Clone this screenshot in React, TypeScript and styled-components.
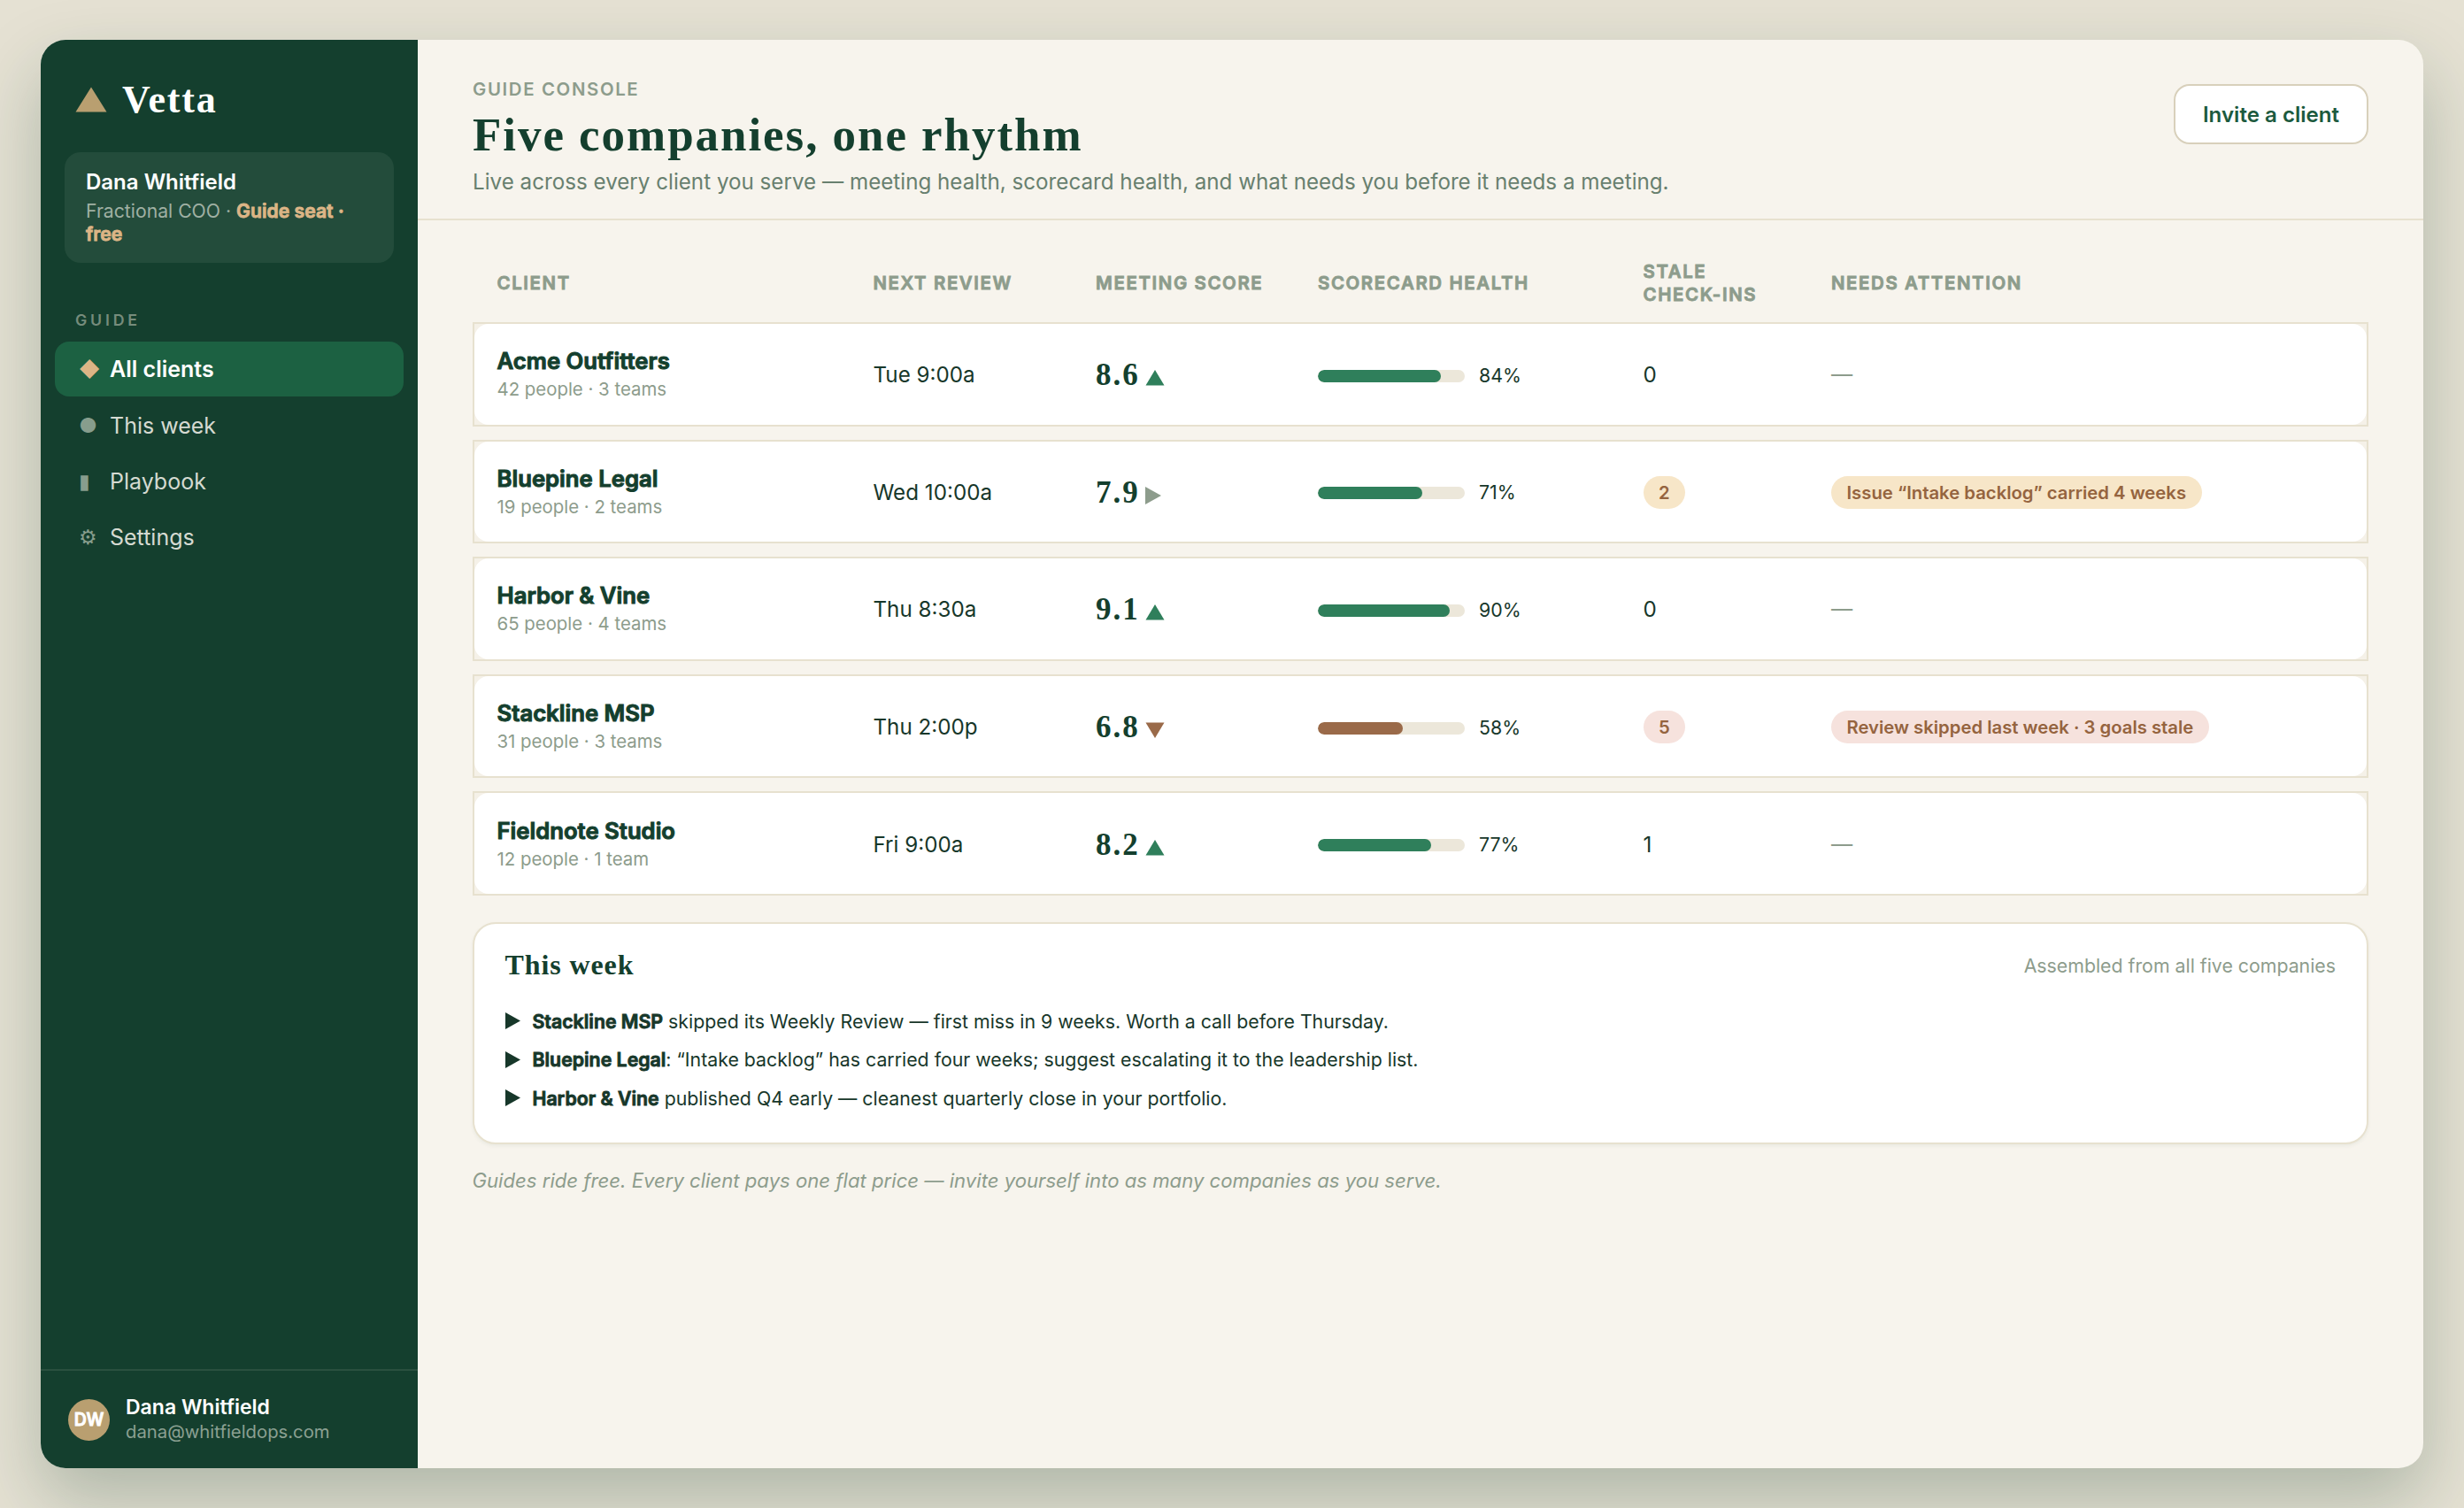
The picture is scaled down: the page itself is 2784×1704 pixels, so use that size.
import React from 'react'
import styled, { createGlobalStyle } from 'styled-components'

type Trend = 'up' | 'flat' | 'down'
type Tone = 'amber' | 'rose'

interface ClientI {
  name: string
  meta: string
  review: string
  score: string
  trend: Trend
  health: number
  stale: number
  tone?: Tone
  attention?: string
}

const clients: ClientI[] = [
  {
    name: 'Acme Outfitters',
    meta: '42 people · 3 teams',
    review: 'Tue 9:00a',
    score: '8.6',
    trend: 'up',
    health: 84,
    stale: 0,
  },
  {
    name: 'Bluepine Legal',
    meta: '19 people · 2 teams',
    review: 'Wed 10:00a',
    score: '7.9',
    trend: 'flat',
    health: 71,
    stale: 2,
    tone: 'amber',
    attention: 'Issue “Intake backlog” carried 4 weeks',
  },
  {
    name: 'Harbor & Vine',
    meta: '65 people · 4 teams',
    review: 'Thu 8:30a',
    score: '9.1',
    trend: 'up',
    health: 90,
    stale: 0,
  },
  {
    name: 'Stackline MSP',
    meta: '31 people · 3 teams',
    review: 'Thu 2:00p',
    score: '6.8',
    trend: 'down',
    health: 58,
    stale: 5,
    tone: 'rose',
    attention: 'Review skipped last week · 3 goals stale',
  },
  {
    name: 'Fieldnote Studio',
    meta: '12 people · 1 team',
    review: 'Fri 9:00a',
    score: '8.2',
    trend: 'up',
    health: 77,
    stale: 1,
  },
]

const navItems = [
  { icon: '◆', label: 'All clients' },
  { icon: '●', label: 'This week' },
  { icon: '▮', label: 'Playbook' },
  { icon: '⚙', label: 'Settings' },
]

const columns = [
  'Client',
  'Next review',
  'Meeting score',
  'Scorecard health',
  'Stale\ncheck-ins',
  'Needs attention',
]

const news = [
  {
    client: 'Stackline MSP',
    text: ' skipped its Weekly Review — first miss in 9 weeks. Worth a call before Thursday.',
  },
  {
    client: 'Bluepine Legal',
    text: ': “Intake backlog” has carried four weeks; suggest escalating it to the leadership list.',
  },
  {
    client: 'Harbor & Vine',
    text: ' published Q4 early — cleanest quarterly close in your portfolio.',
  },
]

const TrendMark: React.FC<{ trend: Trend }> = ({ trend }) => {
  if (trend === 'flat') {
    return (
      <Mark width='18' height='20' viewBox='0 0 18 20'>
        <path d='M0 0L18 10L0 20Z' fill='#8d9c8c' />
      </Mark>
    )
  }
  return (
    <Mark width='22' height='18' viewBox='0 0 22 18'>
      {trend === 'up' ? (
        <path d='M0.5 17.5L11 0L21.5 17.5Z' fill='#2f7f5b' />
      ) : (
        <path d='M0.5 0.5L21.5 0.5L11 18Z' fill='#9a6a49' />
      )}
    </Mark>
  )
}

const ClientRow: React.FC<{ client: ClientI }> = ({ client }) => {
  const { name, meta, review, score, trend, health, stale, tone, attention } =
    client

  return (
    <Row>
      <RowInner>
        <Identity>
          <ClientName>{name}</ClientName>
          <ClientMeta>{meta}</ClientMeta>
        </Identity>
        <Cell>{review}</Cell>
        <Score>
          {score}
          <TrendMark trend={trend} />
        </Score>
        <Health>
          <Track>
            <Fill $low={health < 60} style={{ width: `${health}%` }} />
          </Track>
          {health}%
        </Health>
        <Cell>{tone ? <Badge $tone={tone}>{stale}</Badge> : stale}</Cell>
        <Cell>
          {tone ? <Badge $tone={tone}>{attention}</Badge> : <Dash>—</Dash>}
        </Cell>
      </RowInner>
    </Row>
  )
}

const App: React.FC = () => {
  return (
    <>
      <GlobalStyle />
      <Desk>
        <Window>
          <Sidebar>
            <Brand>
              <svg width='36' height='29' viewBox='0 0 36 29'>
                <path d='M18 0.5L35.5 28.5L0.5 28.5Z' fill='#b99f70' />
              </svg>
              Vetta
            </Brand>
            <Seat>
              <SeatName>Dana Whitfield</SeatName>
              <SeatRole>
                Fractional COO · <strong>Guide seat · free</strong>
              </SeatRole>
            </Seat>
            <NavLabel>Guide</NavLabel>
            <Nav>
              {navItems.map(({ icon, label }, i) => (
                <NavItem key={label} $active={i === 0}>
                  <NavIcon $active={i === 0}>{icon}</NavIcon>
                  {label}
                </NavItem>
              ))}
            </Nav>
            <Account>
              <Avatar>DW</Avatar>
              <div>
                <AccountName>Dana Whitfield</AccountName>
                <AccountMail>dana@whitfieldops.com</AccountMail>
              </div>
            </Account>
          </Sidebar>

          <Main>
            <Header>
              <div>
                <Eyebrow>Guide console</Eyebrow>
                <Title>Five companies, one rhythm</Title>
                <Lead>
                  Live across every client you serve — meeting health, scorecard
                  health, and what needs you before it needs a meeting.
                </Lead>
              </div>
              <InviteButton>Invite a client</InviteButton>
            </Header>

            <Content>
              <HeadRow>
                {columns.map((column) => (
                  <HeadCell key={column}>{column}</HeadCell>
                ))}
              </HeadRow>
              <Rows>
                {clients.map((client) => (
                  <ClientRow key={client.name} client={client} />
                ))}
              </Rows>

              <Card>
                <CardHead>
                  <CardTitle>This week</CardTitle>
                  <CardNote>Assembled from all five companies</CardNote>
                </CardHead>
                {news.map(({ client, text }) => (
                  <NewsItem key={client}>
                    <svg width='17' height='19' viewBox='0 0 17 19'>
                      <path d='M0 0L17 9.5L0 19Z' fill='#17372a' />
                    </svg>
                    <span>
                      <strong>{client}</strong>
                      {text}
                    </span>
                  </NewsItem>
                ))}
              </Card>

              <Footnote>
                Guides ride free. Every client pays one flat price — invite
                yourself into as many companies as you serve.
              </Footnote>
            </Content>
          </Main>
        </Window>
      </Desk>
    </>
  )
}

const GlobalStyle = createGlobalStyle`
  * {
    box-sizing: border-box;
  }

  body {
    margin: 0;
    background: #e5e1d3;
    color: #17372a;
    font-family: Inter, sans-serif;
    font-size: 24.2px;
  }

  /* heavier than semibold, on the semibold widths */
  strong {
    font-weight: 600;
    -webkit-text-stroke: 0.04em currentColor;
  }
`

const Desk = styled.div`
  display: flex;
  height: 1704px;
  padding: 45px 46px;
  overflow: hidden;
`

const Window = styled.div`
  display: flex;
  flex: 1;
  overflow: hidden;
  border-radius: 28px;
  background: #f7f4ed;
  box-shadow: 0 35px 80px rgba(20, 63, 46, 0.26);
`

const Sidebar = styled.aside`
  display: flex;
  flex-direction: column;
  flex: none;
  width: 426px;
  background: #143f2e;
  color: white;
`

const Brand = styled.div`
  display: flex;
  align-items: center;
  gap: 17px;
  height: 48px;
  margin: 43px 39px 0;
  font-family: 'Liberation Serif', serif;
  font-size: 44px;
  font-weight: 700;
  letter-spacing: 1.8px;
`

const Seat = styled.div`
  height: 125px;
  margin: 35.5px 27px 0;
  padding: 19px 24px 0;
  border-radius: 18px;
  background: #234c3b;
`

const SeatName = styled.div`
  font-size: 24px;
  font-weight: 600;
  line-height: 29px;
`

const SeatRole = styled.div`
  margin-top: 5px;
  color: #9fb0a3;
  font-size: 21.2px;
  line-height: 26.5px;

  strong {
    color: #dcb586;
  }
`

const NavLabel = styled.div`
  margin: 54.5px 39px 0;
  color: #768c7c;
  font-size: 17.75px;
  font-weight: 600;
  line-height: 22px;
  letter-spacing: 0.215em;
  text-transform: uppercase;
`

const Nav = styled.nav`
  display: flex;
  flex-direction: column;
  gap: 1.7px;
  margin: 13px 16px 0;
`

const NavItem = styled.a<{ $active: boolean }>`
  display: flex;
  align-items: center;
  height: 61.7px;
  padding: 1px 0 0 27px;
  border-radius: 16px;
  background: ${(props) => (props.$active ? '#1c6142' : 'transparent')};
  color: ${(props) => (props.$active ? 'white' : '#d5dad1')};
  font-size: 25px;
  font-weight: ${(props) => (props.$active ? 600 : 400)};
`

const NavIcon = styled.span<{ $active: boolean }>`
  width: 35px;
  color: ${(props) => (props.$active ? '#dcb586' : '#879d8d')};
  font-size: 23px;
  font-weight: 400;
`

const Account = styled.div`
  display: flex;
  align-items: center;
  gap: 18px;
  height: 112px;
  margin-top: auto;
  padding: 0 31px;
  border-top: 2px solid #2a503f;
`

const Avatar = styled.div`
  display: flex;
  align-items: center;
  justify-content: center;
  width: 47px;
  height: 47px;
  border-radius: 50%;
  background: #b99f70;
  font-size: 19.5px;
  font-weight: 600;
  -webkit-text-stroke: 0.04em currentColor;
`

const AccountName = styled.div`
  font-size: 23px;
  font-weight: 600;
  line-height: 28px;
`

const AccountMail = styled.div`
  color: #8ba092;
  font-size: 20.3px;
  line-height: 28px;
`

const Main = styled.main`
  flex: 1;
`

const Header = styled.header`
  display: flex;
  align-items: flex-start;
  justify-content: space-between;
  height: 204px;
  padding: 43px 62px 0;
  border-bottom: 2px solid #e7e1cf;
`

const Eyebrow = styled.div`
  color: #8d9c8c;
  font-size: 20.4px;
  font-weight: 600;
  line-height: 26px;
  letter-spacing: 0.08em;
  text-transform: uppercase;
`

const Title = styled.h1`
  margin: 10px 0 0;
  color: #143f2e;
  font-family: 'Liberation Serif', serif;
  font-size: 53px;
  font-weight: 700;
  line-height: 56px;
  letter-spacing: 1.95px;
`

const Lead = styled.div`
  margin-top: 11px;
  color: #68806f;
  line-height: 30px;
`

const InviteButton = styled.button`
  width: 220px;
  height: 68px;
  margin-top: 7px;
  border: 2px solid #d8d0bb;
  border-radius: 18px;
  background: white;
  color: #1c5a3e;
  font-family: inherit;
  font-size: 24.1px;
  font-weight: 600;
`

const Content = styled.div`
  padding: 45px 62px 0 61.5px;
`

const HeadRow = styled.div`
  display: grid;
  grid-template-columns: 425px 251.5px 251px 367.5px 212.5px 1fr;
  align-items: center;
  padding: 0 28px;
`

const HeadCell = styled.div`
  color: #8d9c8c;
  font-size: 20.4px;
  font-weight: 600;
  line-height: 26px;
  letter-spacing: 0.08em;
  text-transform: uppercase;
  white-space: pre-line;
  -webkit-text-stroke: 0.04em currentColor;
`

const Rows = styled.div`
  display: flex;
  flex-direction: column;
  gap: 15px;
  margin-top: 18px;
`

const Row = styled.div`
  height: 117.6px;
  border: 2px solid #e7e1cf;
  background: #f5f1e8;
`

const RowInner = styled.div`
  display: grid;
  grid-template-columns: 425px 251.5px 251px 367.5px 212.5px 1fr;
  align-items: center;
  height: 100%;
  padding: 2px 26px 0;
  border-radius: 16px;
  background: white;
`

const Identity = styled.div`
  padding-top: 1px;
`

const Cell = styled.div`
  display: flex;
  align-items: center;
`

const ClientName = styled.div`
  color: #143f2e;
  font-size: 25.7px;
  font-weight: 600;
  line-height: 31px;
  -webkit-text-stroke: 0.04em currentColor;
`

const ClientMeta = styled.div`
  color: #8d9c8c;
  font-size: 20.4px;
  line-height: 33px;
`

const Score = styled.div`
  display: flex;
  align-items: center;
  gap: 6px;
  padding-top: 1px;
  color: #143f2e;
  font-family: 'Liberation Serif', serif;
  font-size: 35px;
  font-weight: 700;
  letter-spacing: 2px;
`

const Mark = styled.svg`
  margin-top: 6px;
`

const Health = styled.div`
  display: flex;
  align-items: center;
  gap: 16px;
  font-size: 21.3px;
`

const Track = styled.div`
  width: 166px;
  height: 14px;
  margin-top: 2px;
  overflow: hidden;
  border-radius: 7px;
  background: #ece7da;
`

const Fill = styled.div<{ $low: boolean }>`
  height: 100%;
  border-radius: 7px;
  background: ${(props) => (props.$low ? '#9a6a49' : '#2f7f5b')};
`

const Badge = styled.span<{ $tone: Tone }>`
  padding: 0 17.5px;
  border-radius: 19px;
  background: ${(props) => (props.$tone === 'amber' ? '#f7e6c8' : '#f6e2dd')};
  color: #95643f;
  font-size: 20.3px;
  font-weight: 600;
  line-height: 37px;
`

const Dash = styled.span`
  color: #8d9c8c;
`

const Card = styled.section`
  height: 251px;
  margin-top: 30px;
  padding: 29px 35px 0;
  border: 2px solid #e7e1cf;
  border-radius: 26px;
  background: white;
  box-shadow: 0 2px 4px rgba(20, 63, 46, 0.06);
`

const CardHead = styled.div`
  display: flex;
  align-items: center;
  justify-content: space-between;
  height: 36px;
  margin-bottom: 23px;
`

const CardTitle = styled.h2`
  margin: 0;
  color: #143f2e;
  font-family: 'Liberation Serif', serif;
  font-size: 32px;
  font-weight: 700;
  letter-spacing: 0.9px;
`

const CardNote = styled.div`
  color: #8d9c8c;
  font-size: 21.3px;
`

const NewsItem = styled.div`
  display: flex;
  align-items: center;
  gap: 14px;
  height: 43.5px;
  font-size: 21.3px;
`

const Footnote = styled.div`
  margin-top: 27px;
  color: #8d9c8c;
  font-size: 22.15px;
  font-style: italic;
  line-height: 28px;
`

export default App
